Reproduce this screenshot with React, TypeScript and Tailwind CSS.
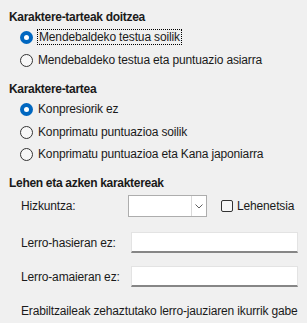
import * as React from "react";

function Radio({ label, checked, focused }: { label: string; checked?: boolean; focused?: boolean }) {
  return (
    <div className="flex h-[20px] items-center pl-[11px]">
      {checked ? (
        <span className="flex h-[13px] w-[13px] items-center justify-center rounded-full bg-[#0067c0]">
          <span className="h-[5px] w-[5px] rounded-full bg-white" />
        </span>
      ) : (
        <span className="h-[13px] w-[13px] rounded-full border border-[#333333] bg-[#f7f7f7]" />
      )}
      <span
        className={
          focused
            ? "ml-[4px] border border-dotted border-black px-[1px] leading-[14px]"
            : "ml-[5px] leading-[14px]"
        }
      >
        {label}
      </span>
    </div>
  );
}

function Heading({ children, className }: { children: React.ReactNode; className?: string }) {
  return (
    <div className={`flex h-[20px] items-center font-bold tracking-[-0.3px] ${className ?? ""}`}>{children}</div>
  );
}

export default function App() {
  return (
    <div
      className="h-[323px] w-[307px] overflow-hidden bg-[#f0f0f0] pl-[9px] pt-[7px] text-[12px] tracking-[-0.15px] text-[#1a1a1a]"
      style={{ fontFamily: '"Liberation Sans", Arial, sans-serif' }}
    >
      <Heading>Karaktere-tarteak doitzea</Heading>
      <Radio label="Mendebaldeko testua soilik" checked focused />
      <div className="mt-[3px]">
        <Radio label="Mendebaldeko testua eta puntuazio asiarra" />
      </div>

      <Heading className="mt-[9px]">Karaktere-tartea</Heading>
      <Radio label="Konpresiorik ez" checked />
      <div className="mt-[3px]">
        <Radio label="Konprimatu puntuazioa soilik" />
      </div>
      <div className="mt-[2px]">
        <Radio label="Konprimatu puntuazioa eta Kana japoniarra" />
      </div>

      <Heading className="mt-[9px]">Lehen eta azken karaktereak</Heading>

      <div className="mt-[2px] flex h-[22px] items-center pl-[12px]">
        <span className="w-[107px]">Hizkuntza:</span>
        <div className="flex h-[22px] w-[79px] border border-[#adadad] bg-white">
          <div className="flex-1" />
          <div className="flex w-[15px] items-center justify-center border-l border-[#d9d9d9]">
            <svg width="8" height="5" viewBox="0 0 8 5" fill="none">
              <path d="M0.5 0.5 L4 4 L7.5 0.5" stroke="#606060" strokeWidth="1" />
            </svg>
          </div>
        </div>
        <span className="ml-[14px] h-[12px] w-[12px] rounded-[2px] border border-[#333333] bg-[#f7f7f7]" />
        <span className="ml-[4px]">Lehenetsia</span>
      </div>

      <div className="mt-[15px] flex h-[21px] items-center pl-[12px]">
        <span className="w-[110px]">Lerro-hasieran ez:</span>
        <div className="h-[21px] w-[167px] border border-b-2 border-[#e3e3e3] border-b-[#868686] bg-white" />
      </div>

      <div className="mt-[13px] flex h-[21px] items-center pl-[12px]">
        <span className="w-[110px]">Lerro-amaieran ez:</span>
        <div className="h-[21px] w-[167px] border border-b-2 border-[#e3e3e3] border-b-[#868686] bg-white" />
      </div>

      <div className="mt-[14px] flex h-[20px] items-center whitespace-nowrap pl-[12px]">
        Erabiltzaileak zehaztutako lerro-jauziaren ikurrik gabe
      </div>
    </div>
  );
}
